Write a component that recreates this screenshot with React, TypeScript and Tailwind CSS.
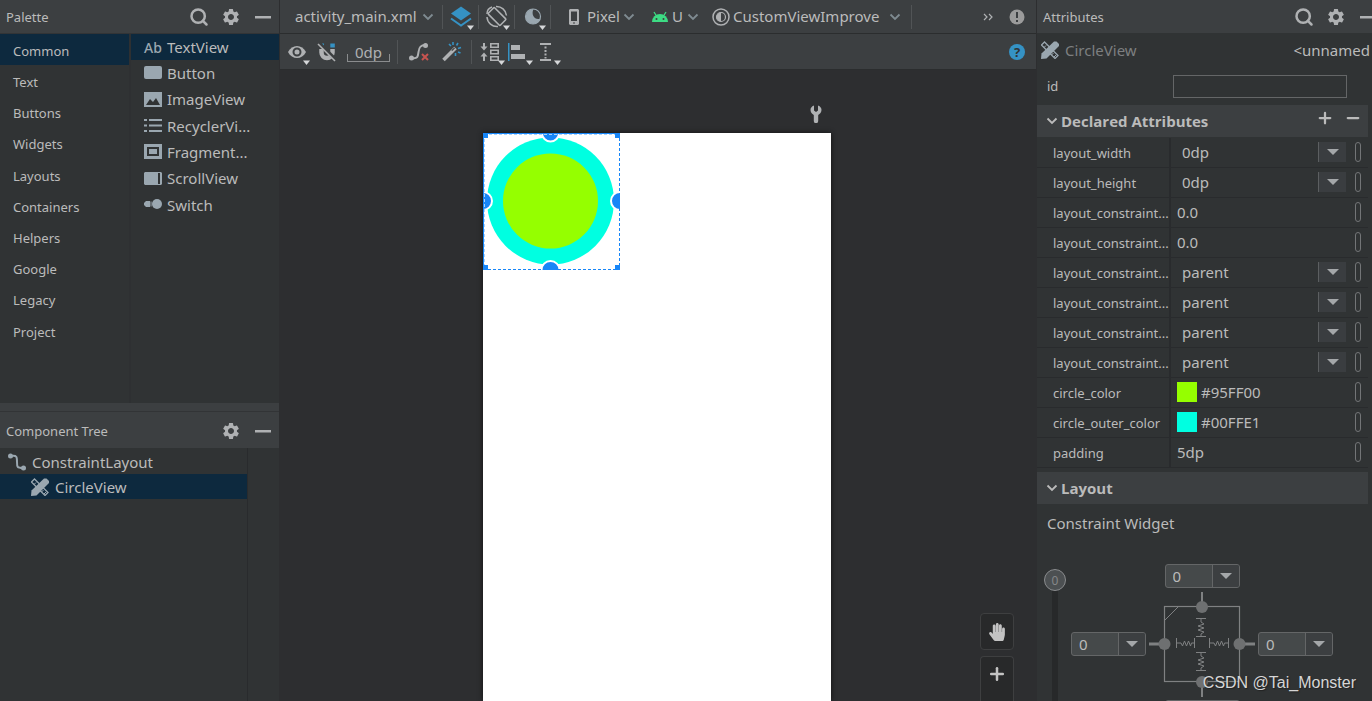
import type { ReactNode } from 'react'
import { useState } from 'react'
import clsx from 'clsx'
import { Minus, Plus, Search } from 'lucide-react'
import { FaHandPaper } from 'react-icons/fa'
import { MdSettings } from 'react-icons/md'

const categories = [
  'Common',
  'Text',
  'Buttons',
  'Widgets',
  'Layouts',
  'Containers',
  'Helpers',
  'Google',
  'Legacy',
  'Project',
]

const widgets = ['TextView', 'Button', 'ImageView', 'RecyclerVi...', 'Fragment...', 'ScrollView', 'Switch']

type Attribute = {
  name: string
  value: string
  kind: 'select' | 'text' | 'color'
  swatch?: string
}

const attributes: Attribute[] = [
  { name: 'layout_width', value: '0dp', kind: 'select' },
  { name: 'layout_height', value: '0dp', kind: 'select' },
  { name: 'layout_constraint...', value: '0.0', kind: 'text' },
  { name: 'layout_constraint...', value: '0.0', kind: 'text' },
  { name: 'layout_constraint...', value: 'parent', kind: 'select' },
  { name: 'layout_constraint...', value: 'parent', kind: 'select' },
  { name: 'layout_constraint...', value: 'parent', kind: 'select' },
  { name: 'layout_constraint...', value: 'parent', kind: 'select' },
  { name: 'circle_color', value: '#95FF00', kind: 'color', swatch: 'bg-[#95ff00]' },
  { name: 'circle_outer_color', value: '#00FFE1', kind: 'color', swatch: 'bg-[#00ffe1]' },
  { name: 'padding', value: '5dp', kind: 'text' },
]

/* ---------- icons ---------- */

function WidgetIcon({ name }: { name: string }) {
  return (
    <svg viewBox="0 0 18 18" className="size-[18px] shrink-0" fill="#9aa7b0" aria-hidden="true">
      {name === 'Button' && <rect x="0" y="2" width="18" height="13" rx="2" />}
      {name === 'ImageView' && <path fillRule="evenodd" d="M0 1h18v15H0zM2 14h14l-4-7-3 4-3-3z" />}
      {name === 'RecyclerVi...' && (
        <path d="M0 2h3v2H0zM5 2h13v2H5zM0 7.500h3v2H0zM5 7.500h13v2H5zM0 13h3v2H0zM5 13h13v2H5z" />
      )}
      {name === 'Fragment...' && (
        <path fillRule="evenodd" d="M0 1h18v15H0zM3 4v9h12V4zM5 6h8v5H5z" />
      )}
      {name === 'ScrollView' && (
        <path fillRule="evenodd" d="M1 2h16l1 1v11l-1 1H1l-1-1V3zM14 3v11h2V3z" />
      )}
      {name === 'Switch' && (
        <>
          <path d="M2 5h4v6H2l-2-2V7zM6.500 5.500h1v5h-1z" />
          <circle cx="13" cy="8" r="5" />
        </>
      )}
    </svg>
  )
}

function CustomViewIcon() {
  return (
    <svg viewBox="0 0 18 18" className="size-[18px] shrink-0" aria-hidden="true">
      <path d="M3.500 1l13.500 13.500-3 3L.5 4z" fill="none" stroke="#9aa7b0" strokeWidth="1.300" />
      <path d="M3 6.500l2-2M10.500 14l2-2M13 16l2-2" stroke="#9aa7b0" />
      <path d="M13 .5h2.500L18 3v2L5.500 17.500 0 18l.5-5.500z" fill="#9aa7b0" />
    </svg>
  )
}

function ConstraintIcon() {
  return (
    <svg viewBox="0 0 18 18" className="size-[18px] shrink-0" fill="#9aa7b0" aria-hidden="true">
      <path d="M3 3c6-1 6 1 6 6s0 6 6 6" fill="none" stroke="#9aa7b0" strokeWidth="2" />
      <circle cx="2.500" cy="3" r="2.500" />
      <circle cx="15.500" cy="15" r="2.500" />
    </svg>
  )
}

/* 28x28 toolbar icon, with the small drop-down mark in its corner when it opens a menu */
function ToolIcon({ menu, children }: { menu?: boolean; children: ReactNode }) {
  return (
    <svg viewBox="0 0 28 28" className="size-7" fill="none" aria-hidden="true">
      {children}
      {menu && <path d="M20 22.500h7L23.500 27z" fill="#d5d7d9" />}
    </svg>
  )
}

function Chevron({ className }: { className?: string }) {
  return (
    <svg viewBox="0 0 12 8" className={clsx('h-2 w-3 shrink-0', className)} fill="none" aria-hidden="true">
      <path d="M1.500 1.500L6 6l4.500-4.500" stroke="currentColor" strokeWidth="1.800" />
    </svg>
  )
}

function Arrow() {
  return (
    <svg viewBox="0 0 12 6" className="h-1.5 w-3" fill="#a4a7a9" aria-hidden="true">
      <path d="M0 0h12L6 6z" />
    </svg>
  )
}

/* ---------- shared parts ---------- */

function PanelHeader({ title, search, className }: { title: string; search?: boolean; className?: string }) {
  return (
    <header className={clsx('flex shrink-0 items-center bg-[#3c3f41] pl-1.5 text-[13px] text-[#bbbbbb]', className)}>
      <h2 className="flex-1 pt-0.5">{title}</h2>
      <div className="flex items-center gap-3 text-[#afb1b3]">
        {search && (
          <button type="button" aria-label="Search">
            <Search className="size-5" strokeWidth={3} />
          </button>
        )}
        <button type="button" aria-label="Settings">
          <MdSettings className="size-5" />
        </button>
        <button type="button" aria-label="Hide">
          <svg viewBox="0 0 20 20" className="size-5" aria-hidden="true">
            <path d="M2 9h16v2.500H2z" fill="currentColor" />
          </svg>
        </button>
      </div>
    </header>
  )
}

function ToolButton({ label, className, children }: { label: string; className?: string; children: ReactNode }) {
  return (
    <button type="button" aria-label={label} className={clsx('flex shrink-0 items-center', className)}>
      {children}
    </button>
  )
}

function Separator() {
  return <span className="h-6 w-px shrink-0 bg-[#515456]" />
}

/* ---------- left ---------- */

function Palette() {
  const [category, setCategory] = useState('Common')
  const [widget, setWidget] = useState('TextView')

  return (
    <section className="flex h-[403px] shrink-0 flex-col">
      <PanelHeader title="Palette" search className="h-[34px] border-b border-[#323436] pr-1.5" />
      <div className="flex flex-1">
        <ul className="flex h-[312px] w-[129px] flex-col text-[13px]">
          {categories.map((item) => (
            <li key={item} className="flex-1">
              <button
                type="button"
                onClick={() => setCategory(item)}
                className={clsx('h-full w-full pl-[13px] pt-1 text-left', category === item && 'bg-[#0d293e]')}
              >
                {item}
              </button>
            </li>
          ))}
        </ul>
        <div className="flex-1 border-l-2 border-[#2e3032]">
          <ul className="flex h-[184px] flex-col text-[15px]">
            {widgets.map((item) => (
              <li key={item} className="flex-1">
                <button
                  type="button"
                  onClick={() => setWidget(item)}
                  className={clsx(
                    'flex h-full w-full items-center gap-[5px] pl-[13px]',
                    widget === item && 'bg-[#0d293e]'
                  )}
                >
                  {item === 'TextView' ? (
                    <span className="w-[18px] text-[14px] font-medium text-[#9aa7b0]">Ab</span>
                  ) : (
                    <WidgetIcon name={item} />
                  )}
                  {item}
                </button>
              </li>
            ))}
          </ul>
        </div>
      </div>
    </section>
  )
}

function ComponentTree() {
  return (
    <section className="flex flex-1 flex-col border-t-8 border-[#3c3f41]">
      <PanelHeader title="Component Tree" className="h-[37px] border-t border-[#323436] pr-1.5 pt-0.5" />
      <div className="flex flex-1">
        <ul className="w-[248px] border-r border-[#292b2d] text-[15px]">
          <li className="flex h-[26px] items-center gap-1.5 pl-2 pt-0.5">
            <ConstraintIcon />
            ConstraintLayout
          </li>
          <li className="flex h-[25px] items-center gap-1.5 bg-[#0d293e] pl-[31px] pt-px">
            <CustomViewIcon />
            CircleView
          </li>
        </ul>
      </div>
    </section>
  )
}

/* ---------- center ---------- */

function TopToolbar() {
  return (
    <div className="flex h-[34px] shrink-0 items-center border-b border-[#2b2d2e] bg-[#3c3f41] text-[15px]">
      <button type="button" className="flex w-[162px] shrink-0 items-center justify-between pl-[15px] pr-2">
        activity_main.xml
        <Chevron className="text-[#7f8b91]" />
      </button>
      <Separator />
      <ToolButton label="Select design surface" className="w-[35px] justify-center">
        <ToolIcon menu>
          <path d="M14 3.500l10 7-10 7-10-7z" fill="#3592c4" />
          <path d="M4 15.500l10 7 10-7" stroke="#3592c4" strokeWidth="2" />
        </ToolIcon>
      </ToolButton>
      <Separator />
      <ToolButton label="Orientation" className="w-[35px] justify-center">
        <ToolIcon menu>
          <rect x="9.500" y="5" width="9" height="17" rx="1" transform="rotate(-45 14 13.500)" stroke="#afb1b3" strokeWidth="1.600" />
          <path d="M13 3.500a10 10 0 0 1 10.500 9M4 14a10 10 0 0 0 11 9.500M4 11c0-3 2-6 5-7" stroke="#afb1b3" strokeWidth="1.500" />
        </ToolIcon>
      </ToolButton>
      <Separator />
      <ToolButton label="Night mode" className="w-[35px] justify-center">
        <ToolIcon menu>
          <circle cx="14" cy="13.500" r="7.500" fill="#3c3f41" stroke="#9aa7b0" strokeWidth="1.200" />
          <path d="M14.500 6a7.500 7.500 0 1 0 7 9.500c-5 2.500-10-3.500-7-9.500z" fill="#9aa7b0" />
        </ToolIcon>
      </ToolButton>
      <Separator />
      <button type="button" className="ml-[17px] flex w-[67px] shrink-0 items-center">
        <svg viewBox="0 0 12 16" className="mr-[7px] h-4 w-3" aria-hidden="true">
          <path fillRule="evenodd" d="M2 0h8l1 1v14l-1 1H2l-1-1V1zM3 2.500v9.500h6V2.500zM5 13.500h2v1H5z" fill="#afb1b3" />
        </svg>
        <span className="flex-1 text-left">Pixel</span>
        <Chevron className="text-[#7f8b91]" />
      </button>
      <button type="button" className="ml-[17px] flex w-[47px] shrink-0 items-center">
        <svg viewBox="0 0 16 12" className="mr-1 h-3 w-4" aria-hidden="true">
          <path d="M0 11a8 8 0 0 1 16 0z" fill="#3ddc84" />
          <path d="M2 1l2.500 4M14 1l-2.500 4" stroke="#3ddc84" strokeWidth="1.300" />
          <circle cx="4.500" cy="8" r="1" fill="#3c3f41" />
          <circle cx="11.500" cy="8" r="1" fill="#3c3f41" />
        </svg>
        <span className="flex-1 text-left">U</span>
        <Chevron className="text-[#7f8b91]" />
      </button>
      <button type="button" className="ml-[13px] flex w-[189px] shrink-0 items-center">
        <svg viewBox="0 0 18 18" className="mr-[3px] size-[18px] shrink-0" fill="none" aria-hidden="true">
          <circle cx="9" cy="9" r="8" stroke="#afb1b3" strokeWidth="1.500" />
          <circle cx="9" cy="9" r="4.500" stroke="#afb1b3" strokeWidth="1.200" />
          <path d="M9 4.500a4.500 4.500 0 0 0 0 9z" fill="#afb1b3" />
        </svg>
        <span className="flex-1 text-left">CustomViewImprove</span>
        <Chevron className="text-[#7f8b91]" />
      </button>
      <span className="ml-2.5 flex">
        <Separator />
      </span>
      <div className="flex flex-1 items-center justify-end gap-4 pr-[11px]">
        <button type="button" aria-label="More actions">
          <svg viewBox="0 0 10 8" className="h-2 w-2.5" fill="none" stroke="#afb1b3" strokeWidth="1.200" aria-hidden="true">
            <path d="M1 1l3 3-3 3M6 1l3 3-3 3" />
          </svg>
        </button>
        <button type="button" aria-label="Issues">
          <svg viewBox="0 0 16 16" className="size-4" aria-hidden="true">
            <circle cx="8" cy="8" r="7.500" fill="#9b9b9b" />
            <path d="M7 3h2v6H7zM7 11h2v2H7z" fill="#3c3f41" />
          </svg>
        </button>
      </div>
    </div>
  )
}

function ActionToolbar() {
  return (
    <div className="flex h-9 shrink-0 items-center border-b border-[#2b2d2e] bg-[#3c3f41] pl-[3px]">
      <ToolButton label="View options">
        <ToolIcon menu>
          <path d="M5 14c4-8 14-8 18 0-4 8-14 8-18 0z" fill="#afb1b3" />
          <circle cx="14" cy="14" r="3.500" fill="#afb1b3" stroke="#3c3f41" strokeWidth="2" />
        </ToolIcon>
      </ToolButton>
      <ToolButton label="Autoconnection" className="ml-0.5">
        <ToolIcon>
          <path d="M8.500 11v3.500a5.500 5.500 0 0 0 11 0V11" stroke="#afb1b3" strokeWidth="4.500" />
          <path d="M17.300 5.500h4.500v4h-4.500zM9 5.500h2v3H9z" fill="#3592c4" />
          <path d="M6 5l17 17" stroke="#3c3f41" strokeWidth="3.500" />
          <path d="M5 6l17 17" stroke="#afb1b3" strokeWidth="1.600" />
        </ToolIcon>
      </ToolButton>
      <button
        type="button"
        className="relative ml-1.5 h-5 w-[43px] text-center text-[15px] leading-4 text-[#afb1b3] before:absolute before:inset-x-0 before:bottom-0 before:h-2 before:border before:border-t-0 before:border-[#8a8c8e]"
      >
        0dp
      </button>
      <span className="mx-[7px] flex">
        <Separator />
      </span>
      <ToolButton label="Clear constraints">
        <ToolIcon>
          <path d="M7 20c6 1 6-2 6.500-6S15 7 20 7" stroke="#afb1b3" strokeWidth="2" />
          <circle cx="6.500" cy="20" r="2.500" fill="#afb1b3" />
          <circle cx="20.500" cy="7.500" r="2.500" fill="#afb1b3" />
          <path d="M17 16l6 6M23 16l-6 6" stroke="#c75450" strokeWidth="2" />
        </ToolIcon>
      </ToolButton>
      <ToolButton label="Infer constraints" className="ml-1">
        <ToolIcon>
          <path d="M6.500 22L18.500 10" stroke="#afb1b3" strokeWidth="3.600" />
          <path d="M14.800 12.700l2.800-2.800" stroke="#3c3f41" strokeWidth="1.200" />
          <path d="M12 6l2 2M16 4v3M21 5l-1.500 2.500M21 10.500l3-1M21 14l2.500 1M18.500 15v3" stroke="#3592c4" strokeWidth="1.600" />
        </ToolIcon>
      </ToolButton>
      <span className="mx-1.5 flex">
        <Separator />
      </span>
      <ToolButton label="Pack">
        <ToolIcon menu>
          <path d="M6 5v5M6 23v-5" stroke="#afb1b3" strokeWidth="2" />
          <path d="M2.500 8.500h7L6 12.500zM2.500 18.500h7L6 14.500z" fill="#afb1b3" />
          <path d="M12.800 5.800h7.400v3.400h-7.400zM12.800 12.300h7.400v3.400h-7.400zM12.800 18.800h7.400v3.400h-7.400z" stroke="#afb1b3" strokeWidth="1.600" />
        </ToolIcon>
      </ToolButton>
      <ToolButton label="Align">
        <ToolIcon menu>
          <path d="M2 5h1.500v18H2z" fill="#3592c4" />
          <path d="M5 7h9v5H5zM5 16h14v5H5z" fill="#afb1b3" />
        </ToolIcon>
      </ToolButton>
      <ToolButton label="Guidelines">
        <ToolIcon menu>
          <path d="M6 6h11M6 22h11" stroke="#afb1b3" strokeWidth="2" />
          <path d="M11.500 8.500v12" stroke="#afb1b3" strokeWidth="2" strokeDasharray="2 1.500" />
        </ToolIcon>
      </ToolButton>
      <div className="flex flex-1 justify-end pr-[11px]">
        <button type="button" aria-label="Help" className="size-4 rounded-full bg-[#3592c4] text-[13px] font-bold leading-4 text-[#303334]">
          ?
        </button>
      </div>
    </div>
  )
}

/* Preview of the custom view with its selection frame and resize handles */
function CirclePreview() {
  return (
    <svg viewBox="0 0 138 138" className="size-[138px]" aria-label="CircleView">
      <circle cx="67.500" cy="68" r="63.500" fill="#00ffe1" />
      <circle cx="67.500" cy="68" r="47.500" fill="#95ff00" />
      <g fill="#1886f7" stroke="#ffffff" strokeWidth="2">
        <circle cx="67.500" cy="0" r="8.500" />
        <circle cx="0" cy="68" r="9" />
        <circle cx="137" cy="68" r="9" />
        <circle cx="67.500" cy="137" r="9" />
      </g>
      <path d="M137.500 0v138M0 137.500h138" stroke="#ffffff" />
      <path d="M136.500 0v137M0 136.500h137" stroke="#1886f7" strokeDasharray="3 2" />
      <path d="M.5 0v137M0 .5h137" stroke="#1886f7" />
      <path d="M1.500 1v136M1 1.500h136" stroke="#a9d3fb" strokeDasharray="3 2" />
      <path d="M0 0h5v5H0zM132 0h5v5h-5zM0 132h5v5H0zM132 132h5v5h-5z" fill="#1886f7" />
    </svg>
  )
}

function DesignSurface() {
  return (
    <div className="relative flex min-h-0 flex-1 flex-col items-center bg-[#2d2e30] pr-0.5">
      <div className="flex min-h-0 w-[348px] flex-1 flex-col">
        <div className="flex h-[63px] shrink-0 justify-end pr-[9px] pt-[35px]">
          <svg viewBox="0 0 12 18" className="h-[18px] w-3" aria-hidden="true">
            <path d="M4 .5v5l2 1.500 2-1.500v-5C10.500 1.500 11.500 3 11.500 5S10 9 8.200 10v6a2.200 2.200 0 0 1-4.400 0v-6C2 9 .5 7 .5 5S1.500 1.500 4 .5z" fill="#afb1b3" />
          </svg>
        </div>
        <div className="flex-1 bg-white shadow-[0_0_5px_#111111]">
          <CirclePreview />
        </div>
      </div>
      <div className="absolute bottom-0 right-[22px] flex w-[34px] flex-col gap-1.5 text-[#c3c3c3]">
        <button type="button" aria-label="Pan" className="flex h-[37px] items-center justify-center rounded border border-[#3e3f40] bg-[#28292a]">
          <FaHandPaper className="size-[18px]" />
        </button>
        <button type="button" aria-label="Zoom in" className="flex h-[45px] justify-center rounded-t border border-b-0 border-[#3e3f40] bg-[#28292a] pt-[7px]">
          <Plus className="size-5" strokeWidth={3} />
        </button>
      </div>
    </div>
  )
}

/* ---------- right ---------- */

function AttributeRow({ attribute, index }: { attribute: Attribute; index: number }) {
  const id = `attribute-${index}`

  return (
    <div className="flex h-[30px] border-b border-[#292b2d]">
      <div className="flex w-[134px] shrink-0 items-center border-r-2 border-[#292b2d] pl-4 pt-0.5">
        <label htmlFor={id} className="whitespace-nowrap text-[13px]">
          {attribute.name}
        </label>
      </div>
      <div className="flex min-w-0 flex-1 items-center pb-px pl-1.5 pr-[7px]">
        {attribute.kind === 'select' ? (
          <div className="relative flex h-full flex-1 items-center">
            <select id={id} className="h-full w-full appearance-none bg-transparent pl-[5px] text-[15px] outline-none">
              <option>{attribute.value}</option>
            </select>
            <span className="pointer-events-none absolute right-[9px] flex h-5 w-7 items-center justify-center border-l border-[#5c5f61] bg-[#3a3d40]">
              <Arrow />
            </span>
          </div>
        ) : (
          <>
            {attribute.swatch && <span className={clsx('mr-1 size-5 shrink-0', attribute.swatch)} />}
            <input
              id={id}
              defaultValue={attribute.value}
              className="min-w-0 flex-1 bg-transparent text-[15px] outline-none"
            />
          </>
        )}
        <button type="button" aria-label="Pick a resource" className="h-5 w-1.5 shrink-0 rounded-[3px] border border-[#737577]" />
      </div>
    </div>
  )
}

function SectionHeader({ title, actions }: { title: string; actions?: boolean }) {
  return (
    <div className="flex h-8 items-center bg-[#3c3f41] pl-[9px] pr-1.5">
      <h3 className="flex flex-1 items-center gap-[3px] font-['Open_Sans',sans-serif] text-[15px] font-bold">
        <Chevron />
        {title}
      </h3>
      {actions && (
        <div className="flex gap-2.5 pb-1.5">
          <button type="button" aria-label="Add attribute">
            <Plus className="size-[18px]" strokeWidth={3} />
          </button>
          <button type="button" aria-label="Remove attribute">
            <Minus className="size-[18px]" strokeWidth={3} />
          </button>
        </div>
      )}
    </div>
  )
}

function MarginSelect({ label }: { label: string }) {
  return (
    <div className="relative h-6 w-[75px] shrink-0">
      <select
        aria-label={label}
        className="h-full w-full appearance-none rounded-[3px] border border-[#646667] bg-[#45494a] pl-[7px] text-[15px] leading-5 outline-none"
      >
        <option>0</option>
      </select>
      <span className="pointer-events-none absolute inset-y-px right-px flex w-[27px] items-center justify-center rounded-r-[2px] border-l border-[#646667] bg-[#3c3f41]">
        <Arrow />
      </span>
    </div>
  )
}

function ConstraintWidget() {
  return (
    <div className="flex pl-[7px] pt-[29px]">
      <div className="relative mt-[5px] h-[160px] w-[22px] shrink-0">
        <input
          type="range"
          aria-label="Vertical bias"
          min={0}
          max={100}
          defaultValue={0}
          className="block h-full w-[22px] appearance-none bg-transparent [writing-mode:vertical-lr] [&::-webkit-slider-runnable-track]:w-1.5 [&::-webkit-slider-runnable-track]:bg-[#27292a] [&::-webkit-slider-thumb]:-ml-2 [&::-webkit-slider-thumb]:size-[22px] [&::-webkit-slider-thumb]:appearance-none [&::-webkit-slider-thumb]:rounded-full [&::-webkit-slider-thumb]:border [&::-webkit-slider-thumb]:border-[#8a8c8e] [&::-webkit-slider-thumb]:bg-[#4c5052]"
        />
        <span className="pointer-events-none absolute inset-x-0 top-0 text-center text-xs leading-6 text-[#858789]">0</span>
      </div>
      <div className="ml-[5px] flex flex-col items-center">
        <MarginSelect label="Top margin" />
        <div className="my-[3px] flex items-center gap-[3px]">
          <MarginSelect label="Left margin" />
          <svg viewBox="0 0 106 106" className="size-[106px]" fill="none" stroke="#7f8182" aria-hidden="true">
            <rect x="15.500" y="15.500" width="75" height="75" strokeWidth="1.200" />
            <path d="M16 29l13-13" />
            <path d="M53 1v14M53 91v15" strokeWidth="2" />
            <path d="M0 53h15M91 53h15" strokeWidth="3" />
            <g fill="#6e7071" stroke="none">
              <circle cx="53" cy="16" r="6" />
              <circle cx="53" cy="91" r="6" />
              <circle cx="15.500" cy="53" r="6" />
              <circle cx="90.500" cy="53" r="6" />
            </g>
            <path d="M47 27.500h10M47 45.500h10M52 28v3l3 2-6 2 6 2-6 2 6 2-3 2v2" />
            <path d="M47 61.500h10M47 79.500h10M52 62v3l3 2-6 2 6 2-6 2 6 2-3 2v2" />
            <path d="M27.500 47v10M45.500 47v10M28 52h4l1.500 3 2-5 2 5 2-5 2 5 1-3h3" />
            <path d="M60.500 47v10M79.500 47v10M61 52h4l1.500 3 2-5 2 5 2-5 2 5 1-3h4" />
          </svg>
          <MarginSelect label="Right margin" />
        </div>
        <MarginSelect label="Bottom margin" />
      </div>
    </div>
  )
}

function Attributes() {
  return (
    <aside className="flex w-[336px] shrink-0 flex-col overflow-hidden border-l border-[#2d2e30]">
      <PanelHeader title="Attributes" search className="-mr-1.5 h-[33px]" />
      <div className="flex h-[34px] shrink-0 items-center gap-1.5 pl-1 pr-0.5 text-[15px]">
        <CustomViewIcon />
        <span className="flex-1 text-[#7d7f80]">CircleView</span>
        <span>&lt;unnamed</span>
      </div>
      <div className="flex h-[38px] shrink-0 items-center justify-between pl-2.5 pr-[25px] text-[13px]">
        <label htmlFor="view-id" className="pt-0.5">
          id
        </label>
        <input id="view-id" className="h-[23px] w-[174px] border border-[#646667] bg-transparent px-1 outline-none" />
      </div>
      <div className="mr-1">
        <SectionHeader title="Declared Attributes" actions />
        <div className="mb-1 pt-px">
          {attributes.map((attribute, index) => (
            <AttributeRow key={index} attribute={attribute} index={index} />
          ))}
        </div>
        <SectionHeader title="Layout" />
        <h4 className="pl-2.5 pt-[7px] text-[15px] leading-6">Constraint Widget</h4>
        <ConstraintWidget />
      </div>
    </aside>
  )
}

export default function App() {
  return (
    <div className="relative flex h-screen overflow-hidden bg-[#303334] font-['Noto_Sans',sans-serif] text-[#bbbbbb]">
      <aside className="flex w-[280px] shrink-0 flex-col border-r border-[#2d2e30]">
        <Palette />
        <ComponentTree />
      </aside>
      <main className="flex min-w-0 flex-1 flex-col">
        <TopToolbar />
        <ActionToolbar />
        <DesignSurface />
      </main>
      <Attributes />
      <p className="pointer-events-none absolute bottom-1.5 right-4 font-['Liberation_Sans',sans-serif] text-base leading-6 text-[#d6d6d6] [text-shadow:1px_1px_1px_#222222]">
        CSDN @Tai_Monster
      </p>
    </div>
  )
}
